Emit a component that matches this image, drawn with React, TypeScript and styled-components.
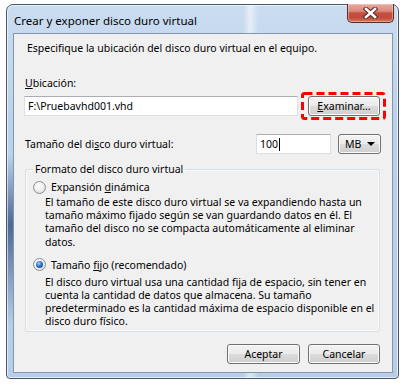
import React from 'react';
import styled, { createGlobalStyle } from 'styled-components';

const Global = createGlobalStyle`
  html, body { margin: 0; padding: 0; background: #ffffff; }
  body { font-family: "Noto Sans", "Open Sans", sans-serif; color: #000; }
  * { box-sizing: border-box; }
`;

const Page = styled.div`
  width: 408px;
  height: 392px;
  padding: 4px 0 0 6px;
`;

const Window = styled.div`
  width: 393px;
  height: 375px;
  border: 1px solid #48586a;
  border-radius: 7px 7px 4px 4px;
  padding: 0 5px 5px 6px;
  display: flex;
  flex-direction: column;
  background:
    linear-gradient(90deg, rgba(255,255,255,0) 0, rgba(255,255,255,0) 236px, rgba(255,255,255,0.55) 243px, rgba(255,255,255,0) 252px),
    linear-gradient(180deg, rgba(40,70,120,0) 0, rgba(40,70,120,0) 150px, rgba(40,70,120,0.75) 220px, rgba(40,70,120,0) 320px) left top / 7px 100% no-repeat,
    linear-gradient(180deg, #cadcf0 0%, #bcd2ea 30%, #b7cde8 100%);
  box-shadow: inset 0 0 0 1px rgba(255,255,255,0.6);
`;

const TitleBar = styled.div`
  height: 28px;
  display: flex;
  align-items: flex-start;
  justify-content: space-between;
  padding-left: 1px;
`;

const Title = styled.span`
  font-size: 11.5px;
  line-height: 16px;
  margin-top: 8px;
  color: #000;
`;

const CloseButton = styled.div`
  width: 47px;
  height: 19px;
  margin: -1px -1px 0 0;
  border: 1px solid #5e2a26;
  border-top: none;
  border-radius: 0 0 5px 5px;
  background: linear-gradient(180deg, #e9a99e 0%, #d98a7c 40%, #c4503f 50%, #c24a39 75%, #d27a5c 100%);
  box-shadow: inset 0 0 0 1px rgba(255,220,210,0.45);
  display: flex;
  align-items: center;
  justify-content: center;
`;

const Client = styled.div`
  flex: 1;
  border: 1px solid #8496ab;
  background: #f0f0f0;
  padding: 7px 12px 0 10px;
  display: flex;
  flex-direction: column;
  font-size: 10.5px;
`;

const Text = styled.div<{ $top?: number; $left?: number }>`
  line-height: 14px;
  margin-top: ${p => p.$top ?? 0}px;
  margin-left: ${p => p.$left ?? 0}px;
  white-space: nowrap;
`;

const Key = styled.span`
  text-decoration: underline;
  text-underline-offset: 1px;
`;

const Row = styled.div<{ $top: number }>`
  display: flex;
  align-items: center;
  height: 20px;
  margin-top: ${p => p.$top}px;
`;

const TextBox = styled.div<{ $width?: number }>`
  height: 20px;
  ${p => (p.$width ? `width: ${p.$width}px;` : 'flex: 1;')}
  background: #fff;
  border: 1px solid #dbdfe6;
  border-top-color: #abadb3;
  padding-left: 3px;
  display: flex;
  align-items: center;
  line-height: 14px;
  white-space: nowrap;
`;

const Caret = styled.span`
  display: inline-block;
  width: 1px;
  height: 13px;
  background: #000;
  margin-left: 1px;
`;

const Button = styled.div<{ $width: number }>`
  width: ${p => p.$width}px;
  height: 20px;
  border: 1px solid #707070;
  border-radius: 3px;
  background: linear-gradient(180deg, #f3f3f3 0%, #ebebeb 48%, #dcdcdc 52%, #cfcfcf 100%);
  box-shadow: inset 0 0 0 1px #fbfbfb;
  display: flex;
  align-items: center;
  justify-content: center;
  line-height: 14px;
  white-space: nowrap;
`;

const Highlight = styled.div`
  position: relative;
  margin: -4px -6px -4px 10px;
  padding: 4px 6px 4px 0;
  display: flex;
`;

const DashedFrame = styled.svg`
  position: absolute;
  left: -7px;
  top: 0;
  width: 85px;
  height: 28px;
  overflow: visible;
`;

const Spacer = styled.div`
  flex: 1;
`;

const Combo = styled.div`
  width: 43px;
  height: 20px;
  margin: 0 -1px 0 7px;
  border: 1px solid #707070;
  border-radius: 3px;
  background: linear-gradient(180deg, #f3f3f3 0%, #ebebeb 48%, #dcdcdc 52%, #cfcfcf 100%);
  box-shadow: inset 0 0 0 1px #fbfbfb;
  display: flex;
  align-items: center;
  justify-content: space-between;
  padding: 0 5px 0 6px;
  line-height: 14px;
`;

const Arrow = styled.span`
  width: 0;
  height: 0;
  border-left: 4px solid transparent;
  border-right: 4px solid transparent;
  border-top: 4px solid #000;
`;

const Group = styled.fieldset`
  margin: 8px 0 0 1px;
  padding: 0 7px 2px 7px;
  border: 1px solid #d5dfe5;
  border-radius: 3px;
  box-shadow: inset 0 0 0 1px rgba(255,255,255,0.7);
  min-width: 0;
`;

const Legend = styled.legend`
  padding: 0 2px;
  line-height: 14px;
`;

const RadioRow = styled.div<{ $top: number }>`
  display: flex;
  align-items: center;
  gap: 5px;
  height: 14px;
  line-height: 14px;
  margin-top: ${p => p.$top}px;
`;

const Radio = styled.span<{ $checked?: boolean }>`
  width: 13px;
  height: 13px;
  border-radius: 50%;
  border: 1px solid #8c8e90;
  background: radial-gradient(circle at 40% 35%, #ffffff 0%, #f0f0f0 45%, #d5d5d5 100%);
  display: flex;
  align-items: center;
  justify-content: center;
  flex: none;
  &::after {
    content: '';
    display: ${p => (p.$checked ? 'block' : 'none')};
    width: 7px;
    height: 7px;
    border-radius: 50%;
    background: radial-gradient(circle at 40% 35%, #9fd0ff 0%, #2e74c8 45%, #0d3f85 100%);
  }
`;

const Para = styled.div<{ $top: number }>`
  margin: ${p => p.$top}px 0 0 12px;
  line-height: 13.2px;
  white-space: nowrap;
`;

const Footer = styled.div`
  display: flex;
  justify-content: flex-end;
  gap: 8px;
  margin-top: 12px;
`;

export default function App() {
  return (
    <Page>
      <Global />
      <Window>
        <TitleBar>
          <Title>Crear y exponer disco duro virtual</Title>
          <CloseButton>
            <svg width="15" height="12" viewBox="0 0 15 12">
              <path d="M3 2 L12 10 M12 2 L3 10" stroke="#5a2a26" strokeWidth="4.6" strokeLinecap="square" />
              <path d="M3 2 L12 10 M12 2 L3 10" stroke="#ffffff" strokeWidth="2.6" strokeLinecap="square" />
            </svg>
          </CloseButton>
        </TitleBar>
        <Client>
          <Text $left={3}>Especifique la ubicación del disco duro virtual en el equipo.</Text>
          <Text $top={21} $left={1}>
            <Key>U</Key>bicación:
          </Text>
          <Row $top={6}>
            <TextBox>F:\Pruebavhd001.vhd</TextBox>
            <Highlight>
              <DashedFrame viewBox="0 0 85 28">
                <rect x="1.5" y="1.5" width="82" height="25" rx="2" fill="none" stroke="#ff0000" strokeWidth="3" strokeDasharray="8 4" />
              </DashedFrame>
              <Button $width={72}>
                <span>
                  <Key>E</Key>xaminar...
                </span>
              </Button>
            </Highlight>
          </Row>
          <Row $top={18}>
            <Text $left={1}>
              Tamaño del di<Key>s</Key>co duro virtual:
            </Text>
            <Spacer />
            <TextBox $width={75}>
              100
              <Caret />
            </TextBox>
            <Combo>
              <span>MB</span>
              <Arrow />
            </Combo>
          </Row>
          <Group>
            <Legend>Formato del disco duro virtual</Legend>
            <RadioRow $top={4}>
              <Radio />
              <span>
                Expansión <Key>d</Key>inámica
              </span>
            </RadioRow>
            <Para $top={2}>
              El tamaño de este disco duro virtual se va expandiendo hasta un
              <br />
              tamaño máximo fijado según se van guardando datos en él. El
              <br />
              tamaño del disco no se compacta automáticamente al eliminar
              <br />
              datos.
            </Para>
            <RadioRow $top={9}>
              <Radio $checked />
              <span>
                Tamaño <Key>f</Key>ijo (recomendado)
              </span>
            </RadioRow>
            <Para $top={4}>
              El disco duro virtual usa una cantidad fija de espacio, sin tener en
              <br />
              cuenta la cantidad de datos que almacena. Su tamaño
              <br />
              predeterminado es la cantidad máxima de espacio disponible en el
              <br />
              disco duro físico.
            </Para>
          </Group>
          <Footer>
            <Button $width={73}>Aceptar</Button>
            <Button $width={72}>Cancelar</Button>
          </Footer>
        </Client>
      </Window>
    </Page>
  );
}
